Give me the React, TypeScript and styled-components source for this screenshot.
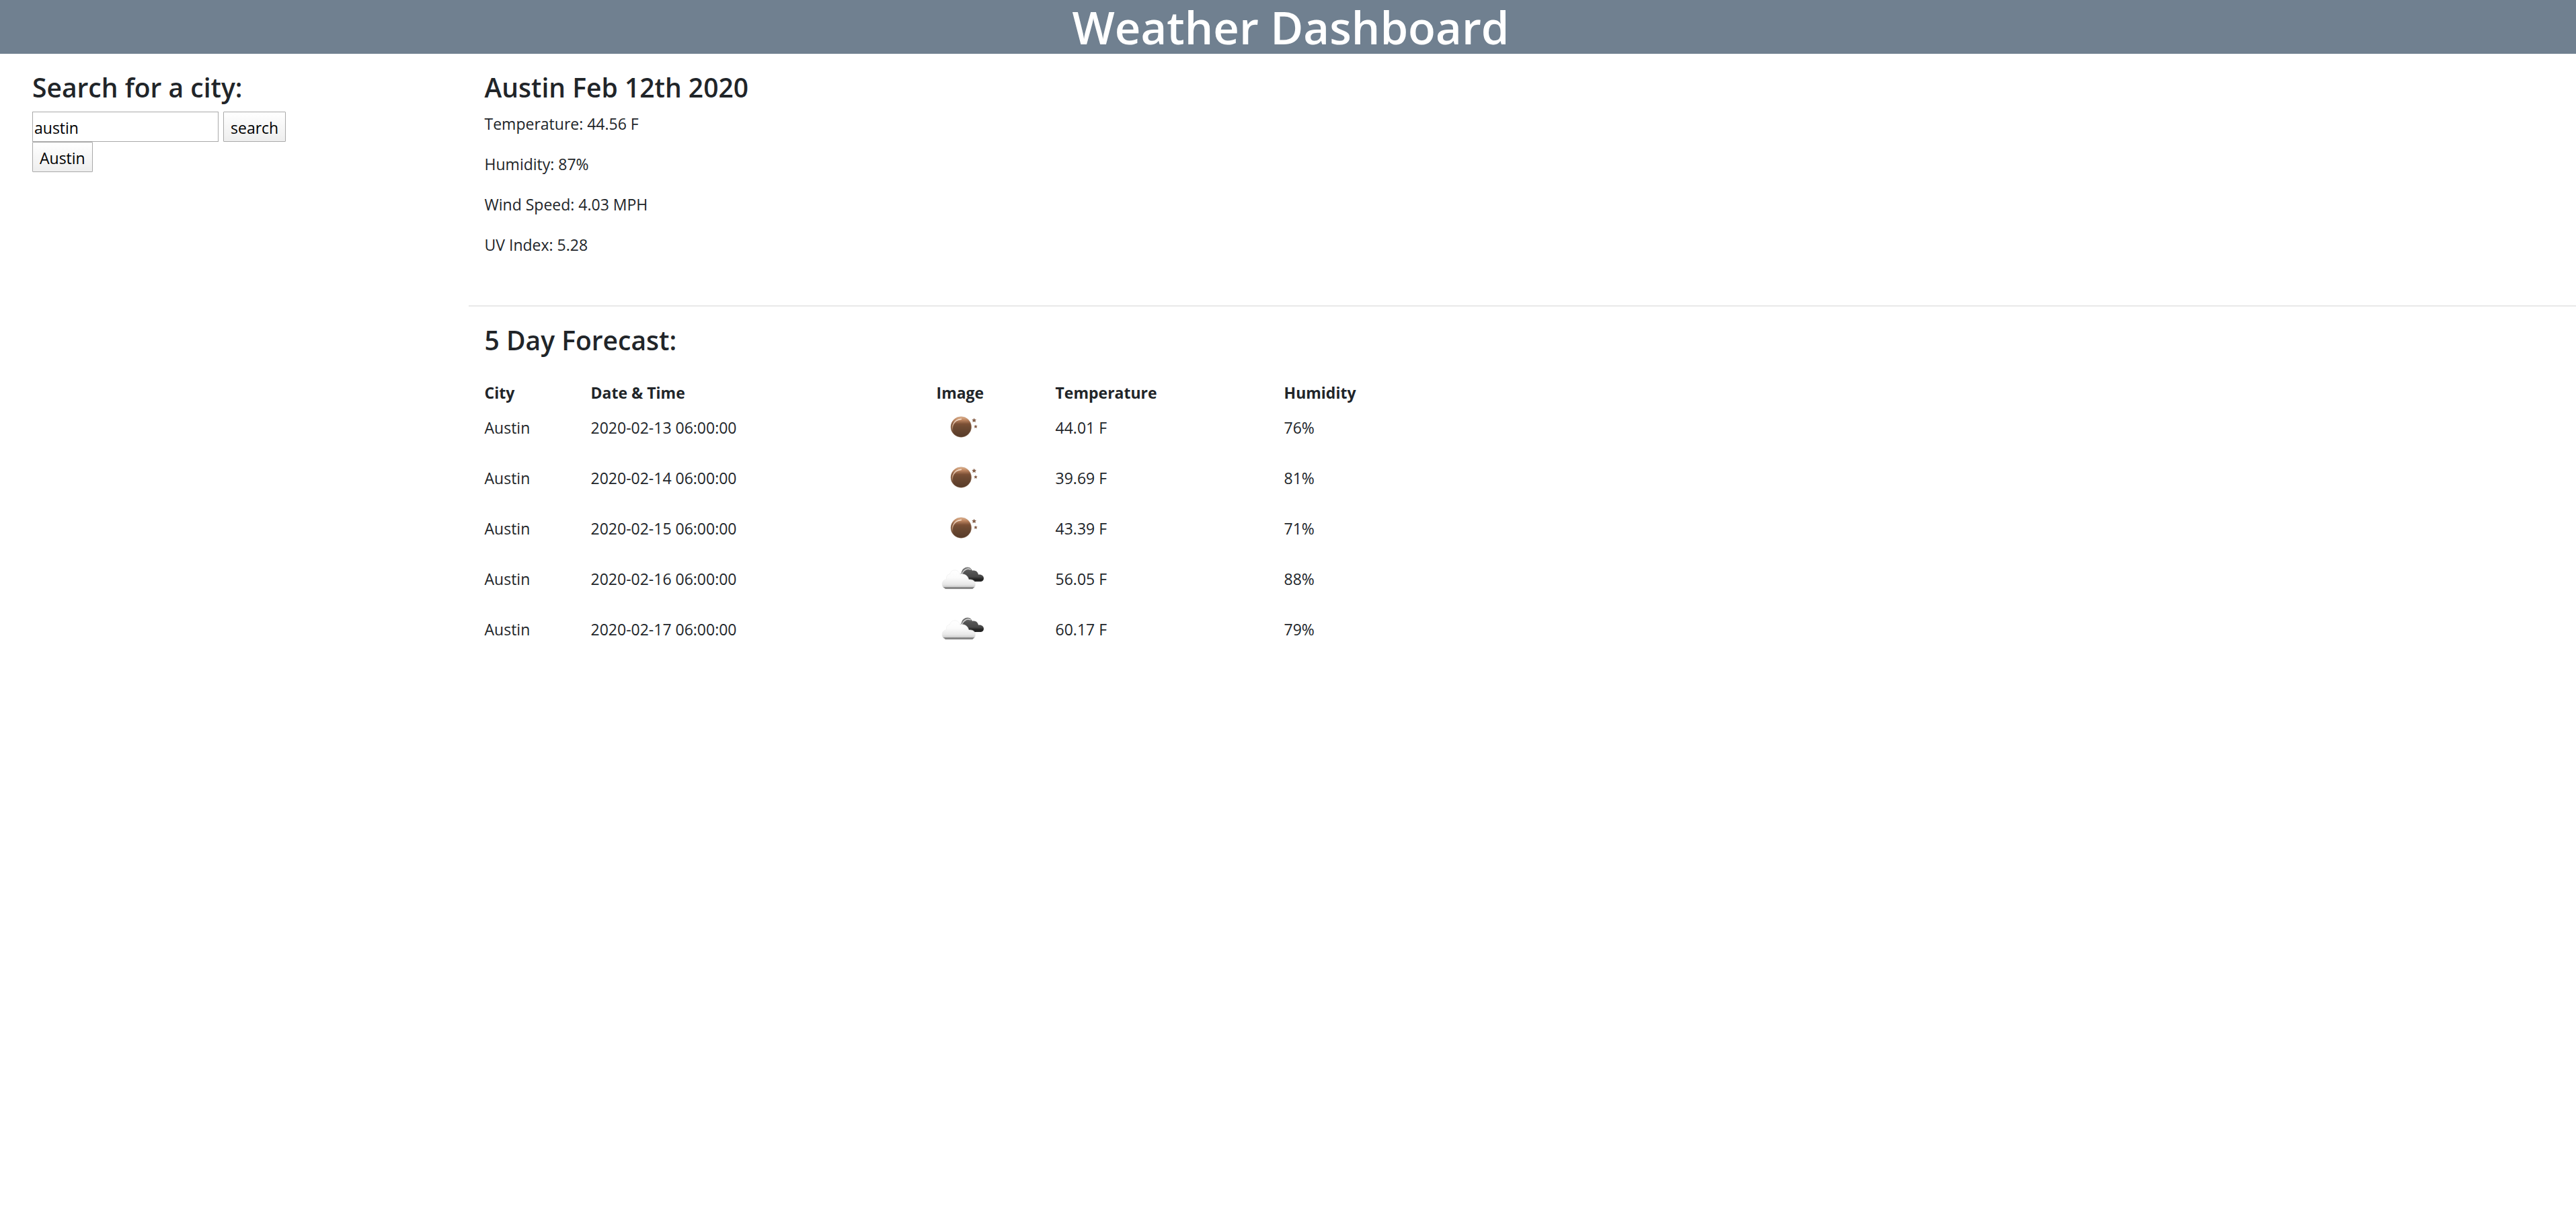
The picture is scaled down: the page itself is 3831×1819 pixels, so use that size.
import React, { useState } from "react";
import styled, { createGlobalStyle } from "styled-components";

const GlobalStyle = createGlobalStyle`
  *, *::before, *::after { box-sizing: border-box; }
  body {
    margin: 0;
    background: #fff;
    color: #212529;
    font-family: "Open Sans", "Noto Sans", sans-serif;
    font-size: 23px;
    line-height: 36px;
  }
`;

const Header = styled.header`
  padding-left: 8px;
  background: slategray;
  color: #fff;
  text-align: center;
`;

const Title = styled.h1`
  margin: 0;
  font-size: 67px;
  font-weight: 600;
  line-height: 80px;
`;

const Layout = styled.div`
  display: grid;
  grid-template-columns: 2fr 9fr;
`;

const Sidebar = styled.aside`
  padding: 24px 24px 24px 48px;
`;

const Heading = styled.h2`
  margin: 0 0 10px;
  font-size: 39px;
  font-weight: 600;
  line-height: 52px;
`;

const SearchForm = styled.form`
  display: flex;
  gap: 7px;
`;

const SearchInput = styled.input`
  width: 277px;
  height: 45px;
  padding: 3px 2px 0;
  border: 1px solid #a9a9a9;
  background: #fff;
  color: #000;
  font: inherit;
`;

const Button = styled.button`
  height: 45px;
  padding: 3px 10px 0;
  border: 1px solid #a9a9a9;
  border-radius: 1px;
  background: linear-gradient(#fff, #eee);
  color: #000;
  font: inherit;
`;

const History = styled.div`
  display: flex;
  flex-direction: column;
  align-items: flex-start;
`;

const Panel = styled.section`
  padding: 24px;
`;

const Current = styled(Panel)`
  border-bottom: 2px solid #e8e8e8;
  padding-bottom: 48px;
`;

const Reading = styled.p`
  margin: 0 0 24px;
`;

const Table = styled.table`
  border-collapse: collapse;
  table-layout: fixed;
`;

const Column = styled.col<{ $width: number }>`
  width: ${(p) => p.$width}px;
`;

const HeadCell = styled.th`
  height: 56px;
  padding: 0;
  line-height: 28px;
  text-align: left;
  vertical-align: bottom;
`;

const Cell = styled.td`
  height: 75px;
  padding: 0;
  vertical-align: middle;
`;

const WeatherIcon = styled.svg`
  display: block;
  width: 75px;
  height: 75px;
`;

const STAR = "M0 -10 L3 -4 L10 -3 L5 2 L7 9 L0 6 L-7 9 L-5 2 L-10 -3 L-3 -4Z";

function ClearNight() {
  return (
    <WeatherIcon viewBox="36 -2 225 225" role="img" aria-label="clear sky">
      <defs>
        <linearGradient id="moonBody" x1="0" y1="0" x2="0" y2="1">
          <stop offset="0" stopColor="#e2b591" />
          <stop offset="0.16" stopColor="#bd8560" />
          <stop offset="0.36" stopColor="#7a4f35" />
          <stop offset="0.5" stopColor="#6e4a32" />
          <stop offset="1" stopColor="#573b29" />
        </linearGradient>
        <linearGradient id="moonRim" x1="0" y1="0" x2="0" y2="1">
          <stop offset="0" stopColor="#f6e0cd" />
          <stop offset="0.6" stopColor="#b98a69" />
          <stop offset="1" stopColor="#7a553d" stopOpacity="0" />
        </linearGradient>
      </defs>
      <circle cx="145" cy="109" r="46" fill="url(#moonBody)" stroke="#a9856b" strokeOpacity="0.6" strokeWidth="2" />
      <path d="M111 136 C97 108 112 77 145 74" fill="none" stroke="url(#moonRim)" strokeWidth="5" strokeLinecap="round" />
      <path d={STAR} transform="translate(203 79)" fill="#86604a" />
      <path d={STAR} transform="translate(210 107) scale(0.8)" fill="#86604a" />
    </WeatherIcon>
  );
}

function BrokenClouds() {
  return (
    <WeatherIcon viewBox="36 -17 225 225" role="img" aria-label="broken clouds">
      <defs>
        <linearGradient id="darkCloud" x1="0" y1="0" x2="0" y2="1">
          <stop offset="0" stopColor="#777" />
          <stop offset="0.3" stopColor="#555" />
          <stop offset="0.65" stopColor="#484848" />
          <stop offset="0.85" stopColor="#1f1f1f" />
          <stop offset="1" stopColor="#2c2c2c" />
        </linearGradient>
        <linearGradient id="whiteCloud" x1="0" y1="0" x2="0" y2="1">
          <stop offset="0" stopColor="#fff" />
          <stop offset="0.4" stopColor="#fbfbfb" />
          <stop offset="0.75" stopColor="#e8e8e8" />
          <stop offset="0.88" stopColor="#d0d0d0" />
          <stop offset="0.92" stopColor="#777" />
          <stop offset="1" stopColor="#8a8a8a" />
        </linearGradient>
      </defs>
      <path
        d="M146 78 C146 56 158 46 172 46 C184 46 191 52 195 60 C208 58 220 64 222 78 C236 76 246 84 246 94 C246 103 240 109 230 109 L176 109 L146 78Z"
        fill="url(#darkCloud)"
      />
      <path d="M139 78 C152 77 150 66 159 60 C167 52 178 50 188 55" fill="none" stroke="#fff" strokeWidth="5" strokeOpacity="0.75" />
      <path d="M140 76 C151 75 148 61 158 52 C166 45 178 44 188 51" fill="none" stroke="#777" strokeWidth="3" />
      <path
        d="M84 142 C69 142 60 133 60 121 C60 109 68 101 80 98 C78 85 84 76 94 76 C98 64 106 58 117 58 C129 58 136 65 140 76 C157 72 175 80 179 100 C197 98 209 107 209 121 C209 134 201 142 187 142Z"
        fill="url(#whiteCloud)"
        stroke="#eee"
        strokeWidth="2"
      />
      <path d="M76 139 H195" stroke="#858585" strokeWidth="6" strokeLinecap="round" />
    </WeatherIcon>
  );
}

const readings = [
  "Temperature: 44.56 F",
  "Humidity: 87%",
  "Wind Speed: 4.03 MPH",
  "UV Index: 5.28",
];

const columns = [
  { label: "City", width: 158 },
  { label: "Date & Time", width: 514 },
  { label: "Image", width: 177 },
  { label: "Temperature", width: 340 },
  { label: "Humidity", width: 160 },
];

const forecast = [
  { time: "2020-02-13 06:00:00", Icon: ClearNight, temp: "44.01 F", humidity: "76%" },
  { time: "2020-02-14 06:00:00", Icon: ClearNight, temp: "39.69 F", humidity: "81%" },
  { time: "2020-02-15 06:00:00", Icon: ClearNight, temp: "43.39 F", humidity: "71%" },
  { time: "2020-02-16 06:00:00", Icon: BrokenClouds, temp: "56.05 F", humidity: "88%" },
  { time: "2020-02-17 06:00:00", Icon: BrokenClouds, temp: "60.17 F", humidity: "79%" },
];

export default function App() {
  const [city, setCity] = useState("austin");
  return (
    <>
      <GlobalStyle />
      <Header>
        <Title>Weather Dashboard</Title>
      </Header>
      <Layout>
        <Sidebar>
          <Heading>
            <label htmlFor="city">Search for a city:</label>
          </Heading>
          <SearchForm onSubmit={(e) => e.preventDefault()}>
            <SearchInput id="city" type="text" value={city} onChange={(e) => setCity(e.target.value)} />
            <Button type="submit">search</Button>
          </SearchForm>
          <History>
            <Button type="button">Austin</Button>
          </History>
        </Sidebar>
        <main>
          <Current>
            <Heading>Austin Feb 12th 2020</Heading>
            {readings.map((text) => (
              <Reading key={text}>{text}</Reading>
            ))}
          </Current>
          <Panel>
            <Heading>5 Day Forecast:</Heading>
            <Table>
              <colgroup>
                {columns.map((c) => (
                  <Column key={c.label} $width={c.width} />
                ))}
              </colgroup>
              <thead>
                <tr>
                  {columns.map((c) => (
                    <HeadCell key={c.label} scope="col">{c.label}</HeadCell>
                  ))}
                </tr>
              </thead>
              <tbody>
                {forecast.map(({ time, Icon, temp, humidity }) => (
                  <tr key={time}>
                    <Cell>Austin</Cell>
                    <Cell>{time}</Cell>
                    <Cell><Icon /></Cell>
                    <Cell>{temp}</Cell>
                    <Cell>{humidity}</Cell>
                  </tr>
                ))}
              </tbody>
            </Table>
          </Panel>
        </main>
      </Layout>
    </>
  );
}
